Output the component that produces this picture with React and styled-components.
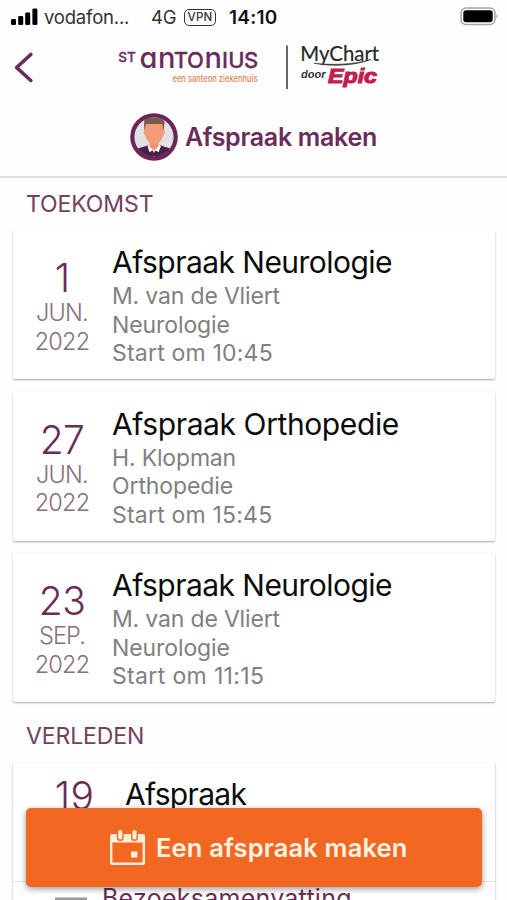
import React from "react";
import styled, { createGlobalStyle } from "styled-components";

const PURPLE = "#6a2c5a";

const GlobalStyle = createGlobalStyle`
  *, *::before, *::after { box-sizing: border-box; }
  html, body { margin: 0; padding: 0; background: #fefefe; }
  body { font-family: Inter, "Liberation Sans", sans-serif; height: 900px; overflow: hidden; }
  svg { display: block; flex: none; }
`;

const Screen = styled.div`
  position: relative;
  width: 507px;
  height: 900px;
  overflow: hidden;
  background: #fefefe;
`;

const StatusBar = styled.div`
  display: flex;
  align-items: center;
  height: 34px;
  padding: 0 9px 0 11px;
  color: #111;
  font-size: 18.5px;
  line-height: 34px;
  white-space: nowrap;
`;

const Carrier = styled.span`
  width: 107px;
  margin-left: 6px;
  color: #333;
  letter-spacing: -0.2px;
`;

const Network = styled.span`
  width: 33px;
  color: #333;
  letter-spacing: -0.2px;
`;

const VpnBadge = styled.span`
  width: 32px;
  height: 17px;
  border: 1.5px solid #333;
  border-radius: 5px;
  color: #333;
  font-size: 11.5px;
  font-weight: 500;
  line-height: 14px;
  letter-spacing: 0.3px;
  text-align: center;
`;

const Clock = styled.span`
  flex: 1;
  margin: 1px 0 0 13px;
  font-weight: 600;
  font-size: 19px;
  letter-spacing: 0.25px;
`;

const Header = styled.header`
  height: 144px;
  border-bottom: 2px solid #dedede;
`;

const LogoRow = styled.div`
  display: flex;
  height: 76px;
  padding-left: 13px;
`;

const TitleRow = styled.div`
  display: flex;
  align-items: center;
  gap: 7px;
  height: 54px;
  padding-left: 130px;
`;

const Title = styled.h1`
  margin: 0;
  color: ${PURPLE};
  font-size: 25px;
  font-weight: 600;
  letter-spacing: -0.3px;
  white-space: nowrap;
`;

const SectionTitle = styled.h2`
  height: ${(p) => p.$height}px;
  margin: 0;
  padding-left: 26px;
  color: #74405f;
  font-size: 23px;
  font-weight: 400;
  line-height: ${(p) => p.$line}px;
  letter-spacing: -0.1px;
`;

const Cards = styled.div`
  display: flex;
  flex-direction: column;
  gap: 12.5px;
  padding: 0 12px 0 13px;
`;

const Card = styled.article`
  display: flex;
  height: 149px;
  background: #fff;
  border-radius: 2px;
  box-shadow: 0 1px 2px rgba(0, 0, 0, 0.35);
`;

const DateColumn = styled.div`
  width: 98px;
  padding-top: 26px;
  color: #85707e;
  font-size: 23.5px;
  font-weight: 300;
  line-height: 28.5px;
  letter-spacing: -0.8px;
  text-align: center;
`;

const Day = styled.div`
  height: 43px;
  color: ${PURPLE};
  font-size: 39px;
  line-height: 43px;
  letter-spacing: -0.6px;
`;

const Details = styled.div`
  padding: 7px 0 0 1px;
  color: #808080;
  font-size: 23px;
  line-height: 28.5px;
  white-space: nowrap;
`;

const CardTitle = styled.div`
  height: 45px;
  color: #0c0c0c;
  font-size: 30px;
  line-height: 50px;
  letter-spacing: ${(p) => p.$spacing}px;
`;

const Line = styled.div`
  letter-spacing: ${(p) => p.$spacing || 0}px;
`;

const PastCard = styled.article`
  margin: 0 12px 0 13px;
  background: #fff;
  box-shadow: 0 1px 2px rgba(0, 0, 0, 0.35);
  white-space: nowrap;
`;

const PastTop = styled.div`
  display: flex;
  height: 119px;
  border-bottom: 1px solid #e3e3e3;
`;

const PastDay = styled.div`
  width: 112px;
  padding-left: 11px;
  color: ${PURPLE};
  font-size: 39px;
  font-weight: 300;
  line-height: 66px;
  letter-spacing: 0.4px;
  text-align: center;
`;

const PastTitle = styled.div`
  color: #0c0c0c;
  font-size: 30px;
  line-height: 63px;
  letter-spacing: -0.7px;
`;

const Summary = styled.div`
  display: flex;
  align-items: flex-start;
  height: 80px;
  padding-left: 41px;
  gap: 15px;
  color: ${PURPLE};
  font-size: 25px;
  line-height: 33px;
  letter-spacing: 0.25px;
`;

const BookButton = styled.button`
  position: absolute;
  left: 26px;
  bottom: 13px;
  display: flex;
  align-items: center;
  gap: 10px;
  width: 456px;
  height: 79px;
  padding: 0 0 0 83px;
  border: 0;
  border-radius: 5px;
  background: #f26722;
  box-shadow: 0 2px 6px rgba(0, 0, 0, 0.4);
  color: #fff3e4;
  font: 600 25.5px Inter, sans-serif;
  letter-spacing: 0.15px;
  white-space: nowrap;
`;

const SignalIcon = () => (
  <svg width="27" height="18" viewBox="0 0 27 18">
    <rect x="0" y="11" width="5" height="6" rx="1.3" />
    <rect x="7.2" y="8" width="5" height="9" rx="1.3" />
    <rect x="14.2" y="4.5" width="5" height="12.5" rx="1.3" />
    <rect x="21.4" y="0.5" width="5" height="16.5" rx="1.3" />
  </svg>
);

const BatteryIcon = () => (
  <svg width="38" height="20" viewBox="0 0 38 20">
    <rect x="1" y="1" width="34" height="16.5" rx="5" fill="#fff" stroke="#a5a5a5" strokeWidth="1.5" />
    <rect x="3.3" y="3.3" width="29.4" height="12" rx="2.8" />
    <path d="M36.5 7.1v4.4c1.3-.9 1.3-3.5 0-4.4Z" fill="#999" />
  </svg>
);

const BackIcon = () => (
  <svg width="22" height="70" viewBox="13 34 22 70" fill="none" stroke={PURPLE} strokeWidth="3.7" strokeLinecap="round" strokeLinejoin="round">
    <path d="M30.8 54.5 16.6 67.5l14.2 13" />
  </svg>
);

const HospitalLogo = () => (
  <svg width="245" height="70" viewBox="35 34 245 70" fill={PURPLE} stroke={PURPLE} strokeWidth="0.3" fontFamily="Inter, sans-serif" fontWeight="500">
    <text x="118.2" y="62" fontSize="13" textLength="17.5" lengthAdjust="spacingAndGlyphs">ST</text>
    <text y="68" fontSize="22">
      <tspan x="139.5" fontSize="29" strokeWidth="0">ɑ</tspan>
      <tspan x="158" fontSize="29" strokeWidth="0">n</tspan>
      <tspan x="173.8">T</tspan>
      <tspan x="187">O</tspan>
      <tspan x="204.6" fontSize="29" strokeWidth="0">n</tspan>
      <tspan x="222">I</tspan>
      <tspan x="228.2">U</tspan>
      <tspan x="244">S</tspan>
    </text>
    <text x="172.5" y="82.3" fontSize="9.5" fill="#dc8558" stroke="none" textLength="85" lengthAdjust="spacingAndGlyphs">een santeon ziekenhuis</text>
  </svg>
);

const ChartLogo = () => (
  <svg width="110" height="70" viewBox="280 34 110 70">
    <path d="M287 45.5v43.5" stroke="#555" strokeWidth="1.8" />
    <text x="300.2" y="60.8" fontSize="20.5" fontFamily="Lato, sans-serif" fontWeight="400" fill="#292929" stroke="#292929" strokeWidth=".2" textLength="79" lengthAdjust="spacingAndGlyphs">MyChart</text>
    <path d="M314 63.2c18 2.2 40 1.4 57-3.8-16 6.6-41 7.2-57 3.8Z" fill="#333" stroke="#333" strokeWidth=".6" />
    <text x="301" y="77.5" fontSize="11.5" fontFamily="Liberation Sans, sans-serif" fontStyle="italic" fontWeight="700" fill="#333" textLength="24.5" lengthAdjust="spacingAndGlyphs">door</text>
    <text x="328" y="83.3" fontSize="20" fontFamily="Liberation Sans, sans-serif" fontStyle="italic" fontWeight="700" fill="#c01f50" stroke="#c01f50" strokeWidth="1.1" textLength="49" lengthAdjust="spacingAndGlyphs">Epic</text>
  </svg>
);

const Avatar = () => (
  <svg width="48" height="48" viewBox="0 0 48 48">
    <circle cx="24" cy="24" r="23.8" fill="#6b2557" />
    <circle cx="24" cy="24" r="19.6" fill="#e2e1e6" />
    <path d="M8 35.4C12 33.8 16 33.8 19 31.5h10.5c3 2.3 7 2.3 10.5 3.9C35.8 40.8 30 43.6 24 43.6S12.2 40.8 8 35.4Z" fill="#49204a" />
    <path d="m17.5 33 2.5-3h8l3 3-2.5 6.3-3-2-1.5 2.7-1.5-2.7-3 2Z" fill="#fff" />
    <path d="M19.5 27h9v6.5L24 37.5l-4.5-4Z" fill="#ec9468" />
    <path d="M14.5 17.5c-1.4.2-.9 4.7.9 5 .7 5 4.8 9 8.8 9s8-4 8.8-9c1.8-.3 2.2-4.8.9-5V10H14.5Z" fill="#f29b75" />
    <path d="M14.2 18V7.2C17 4.9 21 4.600 25 5c3.500-.4 7.800.2 9.600 3.600L33.600 18l-1.400-7H16Z" fill="#76594c" />
  </svg>
);

const CalendarIcon = () => (
  <svg width="37" height="37" viewBox="0 0 37 37">
    <path fillRule="evenodd" d="M3 5h31a2 2 0 0 1 2 2v27a2 2 0 0 1-2 2H3a2 2 0 0 1-2-2V7a2 2 0 0 1 2-2ZM3.4 13.5v20h30.2v-20Z" fill="#fff0dc" />
    <rect x="8.5" y=".2" width="5.6" height="11" rx="2.8" fill="#fff0dc" stroke="#f26722" strokeWidth="1.4" />
    <rect x="22.7" y=".2" width="5.6" height="11" rx="2.8" fill="#fff0dc" stroke="#f26722" strokeWidth="1.4" />
    <rect x="22" y="22.5" width="6.5" height="6" fill="#fff0dc" />
  </svg>
);

const DocumentIcon = () => (
  <svg width="33" height="20" viewBox="0 0 33 20">
    <path d="M1 20V15.5h32v4.5Z" fill="#999" />
  </svg>
);

const appointments = [
  { day: "1", month: "JUN.", title: "Afspraak Neurologie", spacing: -0.54, who: "M. van de Vliert", where: "Neurologie", time: "Start om 10:45", timeSpacing: 0.2 },
  { day: "27", month: "JUN.", title: "Afspraak Orthopedie", spacing: -0.4, who: "H. Klopman", where: "Orthopedie", time: "Start om 15:45", timeSpacing: 0.2 },
  { day: "23", month: "SEP.", title: "Afspraak Neurologie", spacing: -0.54, who: "M. van de Vliert", where: "Neurologie", time: "Start om 11:15", timeSpacing: 0.35 },
];

export default function App() {
  return (
    <Screen>
      <GlobalStyle />
      <StatusBar>
        <SignalIcon />
        <Carrier>vodafon...</Carrier>
        <Network>4G</Network>
        <VpnBadge>VPN</VpnBadge>
        <Clock>14:10</Clock>
        <BatteryIcon />
      </StatusBar>
      <Header>
        <LogoRow>
          <BackIcon />
          <HospitalLogo />
          <ChartLogo />
        </LogoRow>
        <TitleRow>
          <Avatar />
          <Title>Afspraak maken</Title>
        </TitleRow>
      </Header>
      <SectionTitle $height={52} $line={53}>TOEKOMST</SectionTitle>
      <Cards>
        {appointments.map((a) => (
          <Card key={a.day}>
            <DateColumn>
              <Day>{a.day}</Day>
              <div>{a.month}</div>
              <div>2022</div>
            </DateColumn>
            <Details>
              <CardTitle $spacing={a.spacing}>{a.title}</CardTitle>
              <Line $spacing={-0.17}>{a.who}</Line>
              <Line $spacing={-0.1}>{a.where}</Line>
              <Line $spacing={a.timeSpacing}>{a.time}</Line>
            </Details>
          </Card>
        ))}
      </Cards>
      <SectionTitle $height={61} $line={68}>VERLEDEN</SectionTitle>
      <PastCard>
        <PastTop>
          <PastDay>19</PastDay>
          <PastTitle>Afspraak</PastTitle>
        </PastTop>
        <Summary>
          <DocumentIcon />
          <span>Bezoeksamenvatting</span>
        </Summary>
      </PastCard>
      <BookButton>
        <CalendarIcon />
        <span>Een afspraak maken</span>
      </BookButton>
    </Screen>
  );
}
